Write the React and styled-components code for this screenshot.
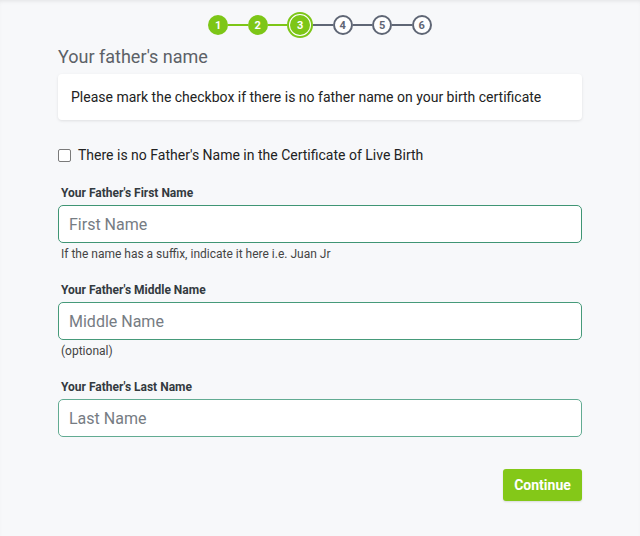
import React, { useState } from 'react';
import styled, { createGlobalStyle } from 'styled-components';

const GlobalStyle = createGlobalStyle`
  body {
    margin: 0;
    background: #f7f8fa;
    font-family: Roboto, 'Liberation Sans', sans-serif;
  }
`;

const steps = [1, 2, 3, 4, 5, 6];
const current = 3;

const fields = [
  {
    name: 'first',
    label: "Your Father's First Name",
    placeholder: 'First Name',
    hint: 'If the name has a suffix, indicate it here i.e. Juan Jr',
    tone: '#3f9574',
  },
  {
    name: 'middle',
    label: "Your Father's Middle Name",
    placeholder: 'Middle Name',
    hint: '(optional)',
    tone: '#469a7a',
  },
  {
    name: 'last',
    label: "Your Father's Last Name",
    placeholder: 'Last Name',
    tone: '#62ab92',
  },
];

const App = () => {
  const [noFather, setNoFather] = useState(false);
  const [values, setValues] = useState({ first: '', middle: '', last: '' });

  const handleChange = (e) => {
    const { name, value } = e.target;
    setValues({ ...values, [name]: value });
  };

  return (
    <Page>
      <GlobalStyle />
      <Stepper>
        {steps.map((step, i) => (
          <React.Fragment key={step}>
            {i > 0 && <Line done={step <= current} />}
            {step === current ? (
              <Ring>
                <Dot state="done">{step}</Dot>
              </Ring>
            ) : (
              <Dot state={step < current ? 'done' : 'todo'}>{step}</Dot>
            )}
          </React.Fragment>
        ))}
      </Stepper>

      <Container>
        <Title>Your father's name</Title>
        <InfoCard>Please mark the checkbox if there is no father name on your birth certificate</InfoCard>

        <CheckRow>
          <Checkbox
            type="checkbox"
            checked={noFather}
            onChange={(e) => setNoFather(e.target.checked)}
          />
          There is no Father's Name in the Certificate of Live Birth
        </CheckRow>

        {fields.map((field) => (
          <FieldGroup key={field.name}>
            <Label>{field.label}</Label>
            <Input
              name={field.name}
              placeholder={field.placeholder}
              value={values[field.name]}
              onChange={handleChange}
              tone={field.tone}
            />
            {field.hint && <Hint>{field.hint}</Hint>}
          </FieldGroup>
        ))}

        <Actions>
          <ContinueButton>Continue</ContinueButton>
        </Actions>
      </Container>
    </Page>
  );
};

const Page = styled.div`
  min-height: 536px;
  box-shadow: inset 0 3px 4px -2px rgba(0, 0, 0, 0.09);
  padding-top: 12px;
  box-sizing: border-box;
`;

const Stepper = styled.div`
  display: flex;
  align-items: center;
  justify-content: center;
  height: 26px;
`;

const Line = styled.div`
  width: 19.5px;
  height: 2px;
  background: ${(p) => (p.done ? '#7dc617' : '#5f6675')};
`;

const Ring = styled.div`
  width: 26px;
  height: 26px;
  box-sizing: border-box;
  border: 2px solid #7dc617;
  border-radius: 50%;
  display: flex;
  align-items: center;
  justify-content: center;
  background: #fff;
`;

const Dot = styled.div`
  width: 20px;
  height: 20px;
  box-sizing: border-box;
  border-radius: 50%;
  display: flex;
  align-items: center;
  justify-content: center;
  font-size: 11px;
  font-weight: 700;
  background: ${(p) => (p.state === 'done' ? '#7dc617' : '#fff')};
  color: ${(p) => (p.state === 'done' ? '#fff' : '#5f6675')};
  border: ${(p) => (p.state === 'done' ? 'none' : '2px solid #5f6675')};
`;

const Container = styled.div`
  width: 524px;
  margin: 0 auto;
`;

const Title = styled.h2`
  margin: 8px 0 6px;
  font-size: 18px;
  line-height: 22px;
  font-weight: 400;
  color: #5c6167;
`;

const InfoCard = styled.div`
  background: #fff;
  border-radius: 4px;
  box-shadow: 0 1px 3px rgba(0, 0, 0, 0.1);
  height: 46px;
  line-height: 46px;
  padding: 0 13px;
  font-size: 14px;
  color: #222;
`;

const CheckRow = styled.label`
  display: flex;
  align-items: center;
  gap: 7px;
  margin-top: 25px;
  height: 20px;
  font-size: 14px;
  color: #222;
  cursor: pointer;
`;

const Checkbox = styled.input`
  appearance: none;
  margin: 0;
  width: 13px;
  height: 13px;
  border: 1.5px solid #7a7a7a;
  border-radius: 2px;
  background: #fff;

  &:checked {
    background: #7dc617;
    border-color: #7dc617;
  }
`;

const FieldGroup = styled.div`
  margin-top: 20px;
`;

const Label = styled.div`
  font-size: 12px;
  line-height: 16px;
  font-weight: 700;
  color: #333a40;
  padding-left: 3px;
  margin-bottom: 4px;
`;

const Input = styled.input`
  display: block;
  width: 100%;
  height: 38px;
  box-sizing: border-box;
  border: 1.5px solid ${(p) => p.tone};
  border-radius: 5px;
  background: #fff;
  padding: 0 10px;
  font-family: Roboto, 'Liberation Sans', sans-serif;
  font-size: 16px;
  color: #333;

  &::placeholder {
    color: #767c83;
  }

  &:focus {
    outline: none;
  }
`;

const Hint = styled.div`
  margin-top: 3px;
  font-size: 12px;
  line-height: 16px;
  color: #444;
  padding-left: 3px;
`;

const Actions = styled.div`
  display: flex;
  justify-content: flex-end;
  margin-top: 32px;
`;

const ContinueButton = styled.button`
  width: 79px;
  height: 32px;
  border: none;
  border-radius: 3px;
  background: #84c818;
  color: #fff;
  font-family: Roboto, 'Liberation Sans', sans-serif;
  font-size: 14px;
  font-weight: 700;
  box-shadow: 0 1px 2px rgba(0, 0, 0, 0.12);
  cursor: pointer;

  &:hover {
    background: #76b514;
  }
`;

export default App;
